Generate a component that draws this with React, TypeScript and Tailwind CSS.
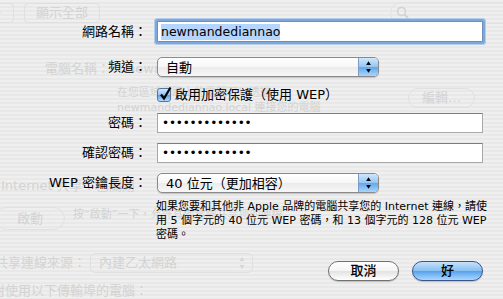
import React from 'react'

const stripes =
  'bg-[repeating-linear-gradient(to_bottom,#efefef_0px,#efefef_2px,#e8e8e8_2px,#e8e8e8_4px)]'

function Arrows({ color = '#000' }: { color?: string }) {
  return (
    <svg width="20" height="20" viewBox="0 0 20 20">
      <path d="M7.5 8 L10 4 L12.5 8 Z" fill={color} />
      <path d="M7.5 12 L12.5 12 L10 16 Z" fill={color} />
    </svg>
  )
}

function Popup({ label }: { label: string }) {
  return (
    <div className="flex h-[20px] w-[222px] overflow-hidden rounded-[5px] border border-[#8a8a8a] bg-[linear-gradient(#ffffff,#f6f6f6_50%,#ebebeb_51%,#f7f7f7)] shadow-[0_1px_1px_rgba(0,0,0,0.18)]">
      <div className="flex flex-1 items-center pl-[8px] text-[13px] leading-none text-black">{label}</div>
      <div className="flex w-[20px] items-center justify-center border-l border-[#7d9cc4] bg-[linear-gradient(#cfe6fc,#94c5f3_50%,#62a6ea_51%,#a9d5fc)]">
        <Arrows />
      </div>
    </div>
  )
}

function Field({ children, focused }: { children?: React.ReactNode; focused?: boolean }) {
  return (
    <div
      className={
        focused
          ? 'flex h-[21px] w-[326px] items-center border border-[#6f8fb8] bg-white pl-[3px] shadow-[0_0_0_2px_#7ea7da,0_0_0_3px_#b4cdec] rounded-[1px]'
          : 'flex h-[20px] w-[326px] items-center border border-[#a8a8a8] border-t-[#7c7c7c] bg-white pl-[4px]'
      }
    >
      {children}
    </div>
  )
}

function Dots() {
  return <span className="text-[12px] leading-none tracking-[-0.2px] text-black">•••••••••••••</span>
}

export default function App() {
  return (
    <div
      className={`relative h-[299px] w-[503px] overflow-hidden font-['DejaVu_Sans','Noto_Sans_CJK_TC',sans-serif] ${stripes}`}
    >
      {/* faded window behind the sheet */}
      <div className="flex h-full flex-col text-[#d3d3d3]">
        <div className="mt-[3px] flex h-[20px] items-center">
          <div className="ml-[-20px] flex h-[20px] w-[34px] items-center justify-end rounded-[4px] border border-[#dfdfdf] pr-[12px] text-[9px]">
            ▸
          </div>
          <div className="ml-[10px] flex h-[20px] w-[76px] items-center justify-center rounded-[4px] border border-[#dfdfdf] text-[13px]">
            顯示全部
          </div>
          <div className="ml-auto mr-[-20px] flex h-[22px] w-[133px] items-center rounded-full border border-[#e2e2e2] pl-[4px]">
            <svg width="16" height="16" viewBox="0 0 16 16">
              <circle cx="6.5" cy="6.5" r="4" fill="none" stroke="#d3d3d3" strokeWidth="1.6" />
              <path d="M9.5 9.5 L13 13" stroke="#d3d3d3" strokeWidth="2" />
            </svg>
          </div>
        </div>
        <div className="mt-[38px] flex h-[16px] items-center pl-[45px] text-[13px]">
          <span>電腦名稱：</span>
          <span className="ml-[17px]">newmandediannao</span>
        </div>
        <div className="mt-[8px] flex items-start">
          <div className="w-[408px] pl-[117px] text-[11px] leading-[15px]">
            在您區域網路上的電腦可以透過
            <br />
            newmandediannao.local 連接您的電腦
          </div>
          <div className="mt-[3px] flex h-[20px] w-[67px] items-center justify-center rounded-full border border-[#e0e0e0] text-[13px]">
            編輯…
          </div>
        </div>
        <div className="mt-[63px] h-[16px] pl-[1px] text-[13px] leading-[16px]">Internet 共享：已關閉</div>
        <div className="mt-[13px] flex items-start">
          <div className="ml-[-5px] flex h-[23px] w-[70px] items-center justify-center rounded-full border border-[#e0e0e0] text-[13px]">
            啟動
          </div>
          <div className="ml-[8px] text-[11px] leading-[15px]">按“啟動”一下，允許其他電腦共享您的連線</div>
        </div>
        <div className="mt-[23px] flex h-[20px] items-center">
          <span className="ml-[-5px] w-[95px] text-[13px]">共享連線來源：</span>
          <div className="flex h-[20px] w-[163px] items-center justify-between rounded-[5px] border border-[#e0e0e0] pl-[8px] text-[13px]">
            內建乙太網路
            <Arrows color="#d6d6d6" />
          </div>
        </div>
        <div className="ml-[-8px] mt-[10px] text-[13px] leading-[16px]">對使用以下傳輸埠的電腦：</div>
      </div>

      {/* the sheet */}
      <div className="absolute inset-0 flex flex-col pt-[21px] text-black">
        <div className="flex h-[21px] items-center">
          <div className="w-[147px] text-right text-[13px]">網路名稱：</div>
          <div className="ml-[10px]">
            <Field focused>
              <span className="bg-[#b5d5ff] text-[12.5px] leading-[16px]">newmandediannao</span>
            </Field>
          </div>
        </div>

        <div className="mt-[15px] flex h-[20px] items-center">
          <div className="w-[147px] text-right text-[13px]">頻道：</div>
          <div className="ml-[10px]">
            <Popup label="自動" />
          </div>
        </div>

        <div className="ml-[157px] mt-[11px] flex h-[14px] items-center">
          <div className="relative h-[14px] w-[14px] rounded-[3px] border border-[#54769f] bg-[linear-gradient(#d4e9fc,#8fc2f2_50%,#5d9fe4_51%,#b3dafd)]">
            <svg className="absolute left-[0px] top-[-3px]" width="16" height="16" viewBox="0 0 16 16">
              <path d="M3 8.5 L6 12.5 L12.5 1.5" fill="none" stroke="#000" strokeWidth="2.2" />
            </svg>
          </div>
          <span className="ml-[4px] text-[13px]">啟用加密保護（使用 WEP）</span>
        </div>

        <div className="mt-[11px] flex h-[20px] items-center">
          <div className="w-[147px] text-right text-[13px]">密碼：</div>
          <div className="ml-[10px]">
            <Field>
              <Dots />
            </Field>
          </div>
        </div>

        <div className="mt-[10px] flex h-[20px] items-center">
          <div className="w-[147px] text-right text-[13px]">確認密碼：</div>
          <div className="ml-[10px]">
            <Field>
              <Dots />
            </Field>
          </div>
        </div>

        <div className="mt-[10px] flex h-[20px] items-center">
          <div className="w-[147px] text-right text-[13px]">WEP 密鑰長度：</div>
          <div className="ml-[10px]">
            <Popup label="40 位元（更加相容）" />
          </div>
        </div>

        <div className="ml-[156px] mt-[7px] whitespace-nowrap text-[11px] leading-[14px]">
          如果您要和其他非 Apple 品牌的電腦共享您的 Internet 連線，請使
          <br />
          用 5 個字元的 40 位元 WEP 密碼，和 13 個字元的 128 位元 WEP
          <br />
          密碼。
        </div>

        <div className="mt-[19px] flex justify-end gap-[13px] pr-[20px]">
          <button className="flex h-[20px] w-[71px] items-center justify-center rounded-full border border-[#707070] bg-[linear-gradient(#ffffff,#f4f4f4_50%,#e2e2e2_51%,#ffffff)] text-[13px] font-medium text-black shadow-[0_1px_1px_rgba(0,0,0,0.2)]">
            取消
          </button>
          <button className="flex h-[20px] w-[71px] items-center justify-center rounded-full border border-[#3d528f] bg-[linear-gradient(#c6e2fb,#86bff2_50%,#57a0ea_51%,#a9d9fe)] text-[13px] font-medium text-black shadow-[0_1px_1px_rgba(0,0,0,0.2)]">
            好
          </button>
        </div>
      </div>
    </div>
  )
}
